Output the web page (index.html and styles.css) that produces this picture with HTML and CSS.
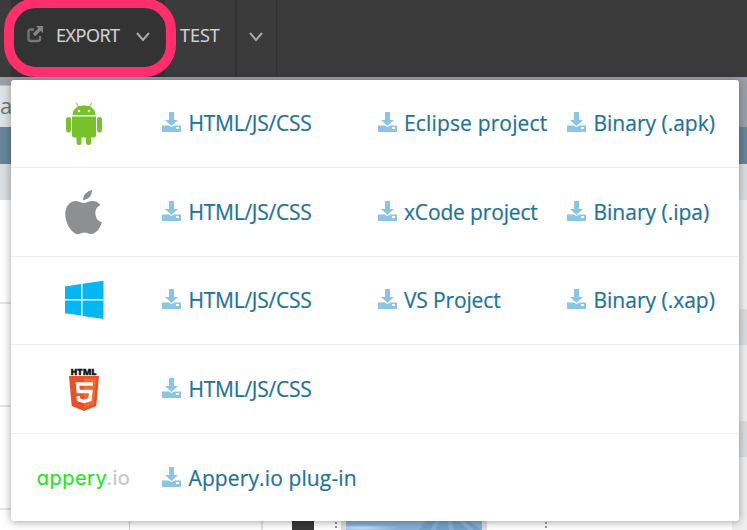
FILE: index.html
```html
<!DOCTYPE html>
<html lang="en">
<head>
<meta charset="utf-8">
<title>Export</title>
<link rel="stylesheet" href="styles.css">
</head>
<body>
<svg width="0" height="0" class="defs">
  <defs>
    <symbol id="download" viewBox="0 0 19 20">
      <path d="M7 0h5v8h4l-6.500 6L3 8h4zM0 13.500h6.500l3 1.500 3-1.500H19V20H0z"/>
      <path d="M14 15h3v2h-3z" fill="#fff"/>
    </symbol>
    <symbol id="chevron" viewBox="0 0 14 10">
      <path d="M1 1l6 7 6-7" fill="none" stroke="currentColor" stroke-width="2"/>
    </symbol>
  </defs>
</svg>
<div class="app">
  <nav class="topbar">
    <div class="nav-item export">
      <svg class="export-icon" viewBox="0 0 17 17"><path d="M7 3.500H3.500Q1.500 3.500 1.500 5.500v7.500q0 2 2 2h7.500q2 0 2-2v-3" fill="none" stroke="#777" stroke-width="2.300"/><path d="M9 0h7v7l-2.300-2.300-5.500 5.500-2.400-2.400 5.500-5.500z" fill="#838383"/></svg>
      <span class="nav-text">EXPORT</span>
      <svg class="chevron"><use href="#chevron"/></svg>
    </div>
    <div class="nav-item test"><span class="nav-text">TEST</span></div>
    <div class="nav-item more"><svg class="chevron"><use href="#chevron"/></svg></div>
  </nav>
  <div class="toolbar"><span>a</span></div>
  <div class="blue-strip"></div>
  <div class="tabs-strip"></div>
  <div class="workspace">
    <div class="tree"><i></i><i></i><i></i></div>
    <div class="canvas">
      <div class="column-line"></div><div class="column-line second"></div>
      <div class="dark-block"></div><div class="dots"></div>
      <div class="photo"><svg viewBox="0 0 136 12" preserveAspectRatio="none"><path d="M82 0L73 12h12L90 0zm13 0l-5 12h13L101 0zm10 0l3 12h14L110 0zm10 0l13 12h7L119 0z" fill="#6898c2" opacity=".65"/></svg></div>
      <div class="dots end"></div>
    </div>
    <div class="properties"><b></b><b></b></div>
  </div>
</div>
<div class="menu">
  <div class="row">
    <div class="brand"><svg width="38" height="44" viewBox="0 0 38 44" fill="#77c12b"><path d="M7.500 14Q8 4.500 19 4.500T30.500 14zM7 15.500h24V34q0 2.500-2.500 2.500h-19Q7 36.500 7 34z"/><rect x="1" y="16" width="5" height="15.500" rx="2.500"/><rect x="32" y="16" width="5" height="15.500" rx="2.500"/><rect x="11.500" y="33" width="5" height="11" rx="2.500"/><rect x="21" y="33" width="5" height="11" rx="2.500"/><path d="M11.500 2l2.500 5M26.500 2L24 7" stroke="#77c12b" stroke-width="1"/><circle cx="14" cy="10" r="1.300" fill="#fff"/><circle cx="24" cy="10" r="1.300" fill="#fff"/></svg></div>
    <a class="html"><svg><use href="#download"/></svg>HTML/JS/CSS</a><a class="eclipse"><svg><use href="#download"/></svg>Eclipse project</a><a><svg><use href="#download"/></svg>Binary (.apk)</a>
  </div>
  <div class="row">
    <div class="brand"><svg width="38" height="46" viewBox="0 0 38 46" fill="#8e8f91"><path d="M18 11.500Q18 3.500 27 .8 27.500 9 18 11.500zM35.500 16Q29.500 19 30.500 26 31.500 31.500 37 33.500 34 42 28.500 44.500 25.500 45.500 22 44q-2.500-1-5 0-4 2-7 .5Q4 41 1 31-1.500 20 4.500 14.500 9 10.500 15 13q4 1.800 7 .3Q30 9.500 35.500 16z"/></svg></div>
    <a class="html"><svg><use href="#download"/></svg>HTML/JS/CSS</a><a class="project"><svg><use href="#download"/></svg>xCode project</a><a><svg><use href="#download"/></svg>Binary (.ipa)</a>
  </div>
  <div class="row">
    <div class="brand"><svg width="40" height="40" viewBox="0 0 40 40" fill="#06b6f1"><path d="M1 6.500L17 4v15H1zM18.500 3.700L39.500.7V19h-21zM1 20.500h16v15L1 33.300zM18.500 20.500h21V39l-21-3z"/></svg></div>
    <a class="html"><svg><use href="#download"/></svg>HTML/JS/CSS</a><a class="project"><svg><use href="#download"/></svg>VS Project</a><a><svg><use href="#download"/></svg>Binary (.xap)</a>
  </div>
  <div class="row">
    <div class="brand html5"><span>HTML</span><svg width="30" height="35" viewBox="0 0 30 35"><path d="M0 0h30l-2.700 30L15 35 2.700 30z" fill="#e65127"/><path d="M15 2.500h12.200l-2.300 26L15 32z" fill="#f2692b"/><path d="M24 8H8.500l.7 7.500h12.600l-.8 8.200L15 25.500l-5.500-1.800-.3-3.700" fill="none" stroke="#fff" stroke-width="3.400"/></svg></div>
    <a class="html"><svg><use href="#download"/></svg>HTML/JS/CSS</a>
  </div>
  <div class="row">
    <div class="brand"><div class="appery">appery<span>.io</span></div></div>
    <a class="plugin"><svg><use href="#download"/></svg>Appery.io plug-in</a>
  </div>
</div>
<div class="highlight"></div>
</body>
</html>
```

FILE: styles.css
```css
* { box-sizing: border-box; }
body { margin: 0; width: 747px; height: 530px; overflow: hidden; background: #fff; font-family: "Open Sans", "Noto Sans", sans-serif; }
.defs { position: absolute; }
.app { height: 530px; display: flex; flex-direction: column; overflow: hidden; }
.topbar { height: 77px; flex: none; display: flex; background: #3b3b3b; padding-left: 11px; color: #d2d3d5; }
.nav-item { height: 77px; display: flex; align-items: center; padding-bottom: 7px; font-size: 18px; -webkit-text-stroke: .2px #d2d3d5; }
.export { width: 154px; background: #333; padding-left: 16px; }
.export-icon { width: 17px; height: 17px; margin-top: -1px; }
.export .nav-text { width: 65px; margin-left: 12px; letter-spacing: -.45px; }
.chevron { width: 14px; height: 10px; color: #aaa; margin-top: 3px; }
.export .chevron { margin-left: 14.5px; }
.test { width: 72px; padding-left: 15px; border-right: 2px solid #333; }
.more { width: 40px; padding-left: 12px; border-right: 1px solid #333; }
.toolbar { height: 50px; flex: none; overflow: hidden; background: linear-gradient(#9ba0a8 0 8px, #dfe2e4 9px); border-right: 20px solid #9ba0a8; color: #70767b; font-size: 22px; line-height: 57px; }
.blue-strip { height: 37px; flex: none; background: #66859a; }
.tabs-strip { height: 36px; flex: none; background: #dadee1; }
.workspace { flex: 1; min-height: 0; display: flex; }
.tree { width: 129px; padding-top: 1px; }
.tree i { display: block; height: 103px; border-bottom: 2px solid #e1e4e9; }
.canvas { flex: 1; display: flex; align-items: flex-end; }
.column-line { width: 134px; height: 12px; border-left: 1px solid #ccc; border-right: 2px solid #dde0e5; }
.column-line.second { width: 29px; border: 0; }
.dark-block { width: 22px; height: 12px; background: #383838; }
.dots { width: 2px; height: 12px; margin-left: 21px; background: repeating-linear-gradient(#999 0 2px, #fff 2px 4px); }
.photo { width: 146px; height: 12px; margin-left: 4px; border: solid #ddd; border-width: 0 5px; background: radial-gradient(ellipse at 15px 10px, #badcf9 0 8px, #86afd7 38px); }
.photo svg { display: block; width: 136px; height: 12px; }
.dots.end { margin-left: 58px; }
.properties { width: 15px; background: #efefef; padding-top: 109px; }
.properties b { display: block; height: 36px; margin-bottom: 76px; background: #dadee1; }
.menu { position: absolute; left: 11px; top: 80px; width: 728px; height: 441px; background: #fff; border-radius: 3px; box-shadow: 0 1px 8px rgba(0,0,0,.36); }
.row { height: 88.6px; display: grid; grid-template-columns: 151px 215.5px 189.5px 172px; align-items: center; padding-bottom: .2px; border-bottom: 1px solid #ededed; }
.row:first-child { height: 88px; padding-bottom: 1.5px; }
.row:nth-child(3) { padding-bottom: 1.2px; }
.row:last-child { height: 88px; padding: 0; border: 0; }
.brand { width: 145px; display: flex; justify-content: center; }
.brand svg { display: block; }
.html5 { flex-direction: column; align-items: center; }
.html5 span { font: 900 9px/9px "Open Sans", sans-serif; color: #151515; -webkit-text-stroke: .4px #151515; }
.appery { font: 400 20px/30px Inter, sans-serif; font-feature-settings: "cv11"; letter-spacing: .5px; white-space: nowrap; color: #1fe51f; -webkit-text-stroke: .2px currentColor; }
.appery span { color: #c5c7c9; }
a { display: flex; align-items: center; gap: 7.5px; white-space: nowrap; color: #21729a; font-size: 21px; line-height: 30px; -webkit-text-stroke: .2px #21729a; }
a svg { width: 19px; height: 20px; fill: #8bc5e5; flex: none; margin-top: -2px; }
.html { letter-spacing: -.25px; }
.eclipse { letter-spacing: .15px; }
.project { letter-spacing: -.15px; }
.plugin { letter-spacing: .12px; }
.highlight { position: absolute; left: 4px; top: -2px; width: 172px; height: 79px; border: 10px solid #ff2e6d; border-radius: 32px; }
```
